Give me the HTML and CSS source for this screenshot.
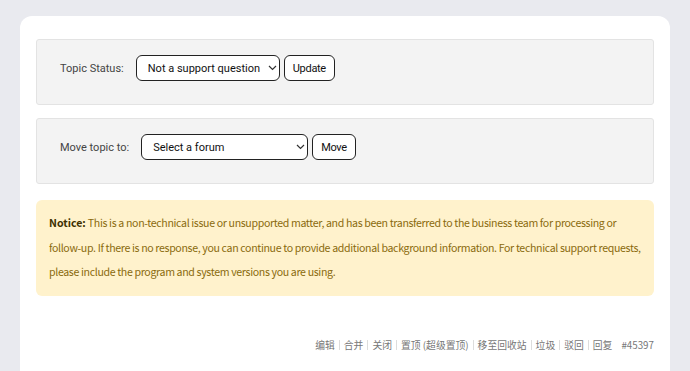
FILE: index.html
```html
<!DOCTYPE html>
<html lang="zh-CN">
<head>
  <meta charset="UTF-8">
  <title>Topic</title>
  <link rel="stylesheet" href="styles.css">
</head>
<body>
<div class="card">
  <form class="mod-box">
    <label for="topic-status">Topic Status:</label>
    <span class="select-wrap">
      <select id="topic-status" class="status-select">
        <option>Not a support question</option>
        <option>Resolved</option>
        <option>Not resolved</option>
      </select>
      <svg class="chevron" viewBox="0 0 9 6"><path d="M1 1l3.5 3.5L8 1"/></svg>
    </span>
    <button type="submit" class="mod-button">Update</button>
  </form>

  <form class="mod-box">
    <label for="move-forum">Move topic to:</label>
    <span class="select-wrap">
      <select id="move-forum" class="forum-select">
        <option>Select a forum</option>
      </select>
      <svg class="chevron" viewBox="0 0 9 6"><path d="M1 1l3.5 3.5L8 1"/></svg>
    </span>
    <button type="submit" class="mod-button">Move</button>
  </form>

  <div class="notice">
    <b>Notice:</b> This is a non-technical issue or unsupported matter, and has been transferred to the business team for processing or follow-up. If there is no response, you can continue to provide additional background information. For technical support requests, please include the program and system versions you are using.
  </div>

  <div class="admin-links">
    <a href="#">编辑</a><span class="sep"></span>
    <a href="#">合并</a><span class="sep"></span>
    <a href="#">关闭</a><span class="sep"></span>
    <a href="#">置顶 (超级置顶)</a><span class="sep"></span>
    <a href="#">移至回收站</a><span class="sep"></span>
    <a href="#">垃圾</a><span class="sep"></span>
    <a href="#">驳回</a><span class="sep"></span>
    <a href="#">回复</a>
    <span class="post-id">#45397</span>
  </div>
</div>
</body>
</html>
```

FILE: styles.css
```css
body {
  margin: 0;
  padding: 16px 20px 0;
  background: #e9eaef;
  font-family: Roboto, "Noto Sans", sans-serif;
}
.card {
  background: #fff;
  border-radius: 12px;
  padding: 23px 16px 40px;
  min-height: 400px;
}
.mod-box {
  display: flex;
  align-items: center;
  margin: 0 0 13px;
  padding: 15px 23px 23px;
  background: #f3f3f3;
  border: 1px solid #e3e3e3;
  border-radius: 3px;
}
.mod-box label {
  font-size: 11px;
  color: #444;
  margin-right: 12px;
}
.select-wrap {
  position: relative;
  display: inline-flex;
}
.mod-box select {
  appearance: none;
  height: 26px;
  margin: 0;
  padding: 0 12px 0 11px;
  border: 1px solid #222;
  border-radius: 6px;
  background: #fff;
  color: #111;
  font-family: Roboto, "Noto Sans", sans-serif;
  font-size: 11px;
}
.chevron {
  position: absolute;
  right: 3px;
  top: 10px;
  width: 9px;
  height: 6px;
  fill: none;
  stroke: #333;
  stroke-width: 1.2;
  pointer-events: none;
}
.status-select {
  width: 144px;
}
.forum-select {
  width: 167px;
}
.mod-button {
  height: 26px;
  margin-left: 4px;
  padding: 0 8px;
  border: 1px solid #222;
  border-radius: 6px;
  background: #fff;
  color: #111;
  font-family: Roboto, "Noto Sans", sans-serif;
  font-size: 11px;
  letter-spacing: -0.3px;
}
.notice {
  margin-top: 16px;
  padding: 11px 13px;
  background: #fff2cc;
  border-radius: 6px;
  color: #8a6a0c;
  font-family: "Noto Sans CJK SC", sans-serif;
  font-size: 10.6px;
  letter-spacing: -0.35px;
  line-height: 24.5px;
}
.notice b {
  color: #3d3000;
  letter-spacing: 0;
}
.admin-links {
  display: flex;
  justify-content: flex-end;
  align-items: center;
  margin-top: 41px;
  font-family: "Noto Sans CJK SC", sans-serif;
  font-size: 9.8px;
  line-height: 16px;
  color: #777;
}
.admin-links a {
  color: #777;
  text-decoration: none;
}
.sep {
  width: 0;
  height: 10px;
  margin: 0 4px;
  border-left: 1px solid #ddd;
}
.post-id {
  margin-left: 9px;
}
```
